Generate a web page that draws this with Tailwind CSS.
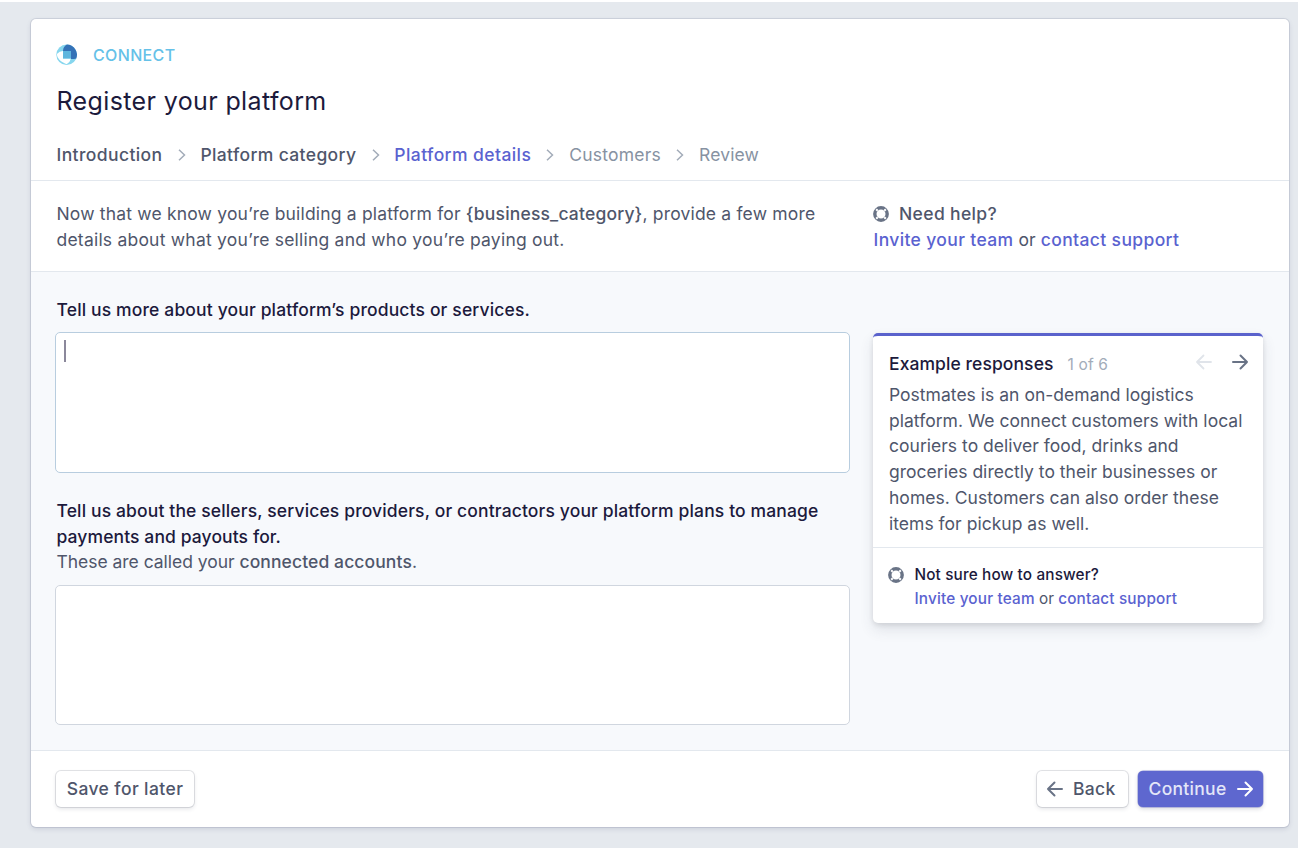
<!DOCTYPE html>
<html lang="en">
<head>
<meta charset="utf-8">
<title>Register your platform</title>
<script src="https://cdn.jsdelivr.net/npm/@tailwindcss/browser@4"></script>
</head>
<body class="h-[852px] overflow-hidden bg-white pt-[2px] font-['Inter',sans-serif] text-[17.5px] leading-[25.75px] text-[#4f566b]">
<div class="h-[846px] bg-[#e5e9ee] pl-[31px] pr-[9px] pt-[17px]">
<main class="flex h-[808px] flex-col overflow-hidden rounded-[5px] bg-white shadow-[0_0_0_1px_rgba(60,66,110,0.12),0_2px_5px_rgba(60,66,110,0.16)]">
  <header class="h-[162px] shrink-0 border-b border-[#e3e8ee] px-[25px] pt-[22px]">
    <div class="flex items-center">
      <svg class="size-[22px]" viewBox="0 0 22 22"><circle cx="10.6" cy="10.8" r="10.3" fill="#86d6ee"/><path d="M7 7C7 4 8.800 1.600 11 .6A10.200 10.200 0 0 1 20.300 14.500Q18.500 15 15 15V7Z" fill="#3472b7"/><path d="M.9 10Q3.500 7 7 7V14.500H15Q14 18.500 10.600 20.200C5 18 1 14.500 .9 10Z" fill="#fff"/><rect x="7" y="7" width="8" height="7.500" fill="#5fb6de"/></svg>
      <span class="ml-[15px] pt-[2px] text-[16px] font-medium tracking-[0.35px] text-[#65c1e8]">CONNECT</span>
    </div>
    <h1 class="mt-[15px] pl-[0.5px] text-[25px] leading-[34px] tracking-[0.38px] text-[#1c1a3c]">Register your platform</h1>
    <nav class="mt-[24px] flex items-center pl-[0.5px] font-medium">
      <span class="tracking-[0.4px]">Introduction</span>
      <svg class="ml-[15.2px] mr-[14.8px] h-3 w-2" viewBox="0 0 8 12" fill="none" stroke="#a3acb9" stroke-width="1.5"><path d="M1 .7 6.500 6 1 11.300"/></svg>
      <span class="tracking-[0.36px]">Platform category</span>
      <svg class="ml-[15.2px] mr-[14.8px] h-3 w-2" viewBox="0 0 8 12" fill="none" stroke="#a3acb9" stroke-width="1.5"><path d="M1 .7 6.500 6 1 11.300"/></svg>
      <span class="tracking-[0.41px] text-[#5a62d0]">Platform details</span>
      <svg class="ml-[15.2px] mr-[14.8px] h-3 w-2" viewBox="0 0 8 12" fill="none" stroke="#a3acb9" stroke-width="1.5"><path d="M1 .7 6.500 6 1 11.300"/></svg>
      <span class="font-normal tracking-[0.22px] text-[#8792a2]">Customers</span>
      <svg class="ml-[15.2px] mr-[14.8px] h-3 w-2" viewBox="0 0 8 12" fill="none" stroke="#a3acb9" stroke-width="1.5"><path d="M1 .7 6.500 6 1 11.300"/></svg>
      <span class="font-normal tracking-[0.15px] text-[#8792a2]">Review</span>
    </nav>
  </header>
  <section class="flex h-[91px] shrink-0 border-b border-[#e3e8ee] pl-[25.5px] pt-[19.8px]">
    <p class="w-[817px] whitespace-nowrap"><span class="tracking-[0.18px]">Now that we know you’re building a platform for <span class="font-medium">{business_category}</span>, provide a few more</span><br><span class="tracking-[0.218px]">details about what you’re selling and who you’re paying out.</span></p>
    <div class="whitespace-nowrap font-medium tracking-[0.36px]">
      <div class="flex items-center"><svg class="-ml-[0.5px] mr-[10px] size-4" viewBox="0 0 16 16"><circle cx="8" cy="8" r="6.200" fill="none" stroke="#697386" stroke-width="3.400"/><path d="m3.200 3.200 1.500 1.500m6.600 6.600 1.500 1.500m0-9.600-1.500 1.500m-6.600 6.600-1.500 1.500" stroke="#fff" stroke-width="2"/></svg><span>Need help?</span></div>
      <div><span class="text-[#5a62d0]">Invite your team</span> <span class="font-normal tracking-[0.1px]">or</span> <span class="text-[#5a62d0]">contact support</span></div>
    </div>
  </section>
  <section class="flex min-h-0 flex-1 bg-[#f7f9fc] pl-[24px] pr-[26px]">
    <form class="w-[795px] shrink-0 pt-[25px]">
      <div class="pl-[1.5px] font-medium tracking-[0.145px] text-[#1c1a3c]">Tell us more about your platform’s products or services.</div>
      <div class="mt-[9px] h-[141px] rounded-[5px] border border-[#b8cddf] bg-white pl-[8px] pt-[7px]"><div class="h-[22px] w-[2px] bg-[#8b889b]"></div></div>
      <div class="mt-[25px] whitespace-nowrap pl-[1.5px]"><div class="font-medium text-[#1c1a3c]"><span class="tracking-[0.135px]">Tell us about the sellers, services providers, or contractors your platform plans to manage</span><br><span class="tracking-[0.1px]">payments and payouts for.</span></div><span class="tracking-[-0.03px]">These are called your <span class="font-medium tracking-[0.1px]">connected accounts</span>.</span></div>
      <div class="mt-[10px] h-[140px] rounded-[5px] border border-[#d0d6df] bg-white"></div>
    </form>
    <aside class="ml-[23px] mt-[61px] h-[290px] w-[390px] shrink-0 whitespace-nowrap rounded-[5px] border-t-[3px] border-[#5a62cc] bg-white shadow-[0_7px_14px_rgba(60,66,87,0.12),0_2px_5px_rgba(0,0,0,0.10)]">
      <div class="h-[212px] border-b border-[#e3e8ee] pl-[16px] pr-[14px] pt-[14px]">
        <div class="flex items-center"><span class="font-medium tracking-[0.08px] text-[#1c1a3c]">Example responses</span><span class="ml-[14px] pt-[2px] text-[15.5px] tracking-[0.14px] text-[#a3acb9]">1 of 6</span>
        <svg class="mb-[4px] ml-auto h-4 w-[18px]" viewBox="0 0 18 16" fill="none" stroke="#e0e4ea" stroke-width="1.8" stroke-linecap="round" stroke-linejoin="round"><path d="M16 8H2m6.500-6.500L2 8l6.500 6.500"/></svg>
        <svg class="mb-[4px] ml-[18px] h-4 w-[18px]" viewBox="0 0 18 16" fill="none" stroke="#697386" stroke-width="2" stroke-linecap="round" stroke-linejoin="round"><path d="M2 8h14M9.500 1.500 16 8l-6.500 6.500"/></svg></div>
        <p class="mt-[4px] tracking-[0.02px]">Postmates is an on-demand logistics<br>platform. We connect customers with local<br>couriers to deliver food, drinks and<br>groceries directly to their businesses or<br>homes. Customers can also order these<br>items for pickup as well.</p>
      </div>
      <div class="flex pl-[15px] pt-[15px] text-[15.3px] font-medium leading-[23.5px] tracking-[0.18px]"><svg class="mr-[10.5px] mt-[4px] size-4" viewBox="0 0 16 16"><circle cx="8" cy="8" r="6.200" fill="none" stroke="#697386" stroke-width="3.400"/><path d="m3.200 3.200 1.500 1.500m6.600 6.600 1.500 1.500m0-9.600-1.500 1.500m-6.600 6.600-1.500 1.500" stroke="#fff" stroke-width="2"/></svg><div><span class="tracking-[0.15px] text-[#1c1a3c]">Not sure how to answer?</span><br><span class="text-[#5a62d0]">Invite your team</span> <span class="font-normal tracking-normal">or</span> <span class="text-[#5a62d0]">contact support</span></div></div>
    </aside>
  </section>
  <footer class="flex h-[77px] shrink-0 border-t border-[#e3e8ee] pl-[25px] pr-[26px] pt-[20px] font-medium">
    <button class="h-[36px] w-[138px] rounded-[5px] bg-white tracking-[0.4px] shadow-[0_0_0_1px_rgba(60,66,87,0.14),0_2px_4px_rgba(60,66,87,0.14)]">Save for later</button>
    <button class="ml-auto flex h-[36px] w-[91px] items-center rounded-[5px] bg-white pl-[9px] tracking-[0.3px] shadow-[0_0_0_1px_rgba(60,66,87,0.14),0_2px_4px_rgba(60,66,87,0.14)]"><svg class="mr-[9px] h-4 w-[18px]" viewBox="0 0 18 16" fill="none" stroke="#697386" stroke-width="2" stroke-linecap="round" stroke-linejoin="round"><path d="M16 8H2m6.500-6.500L2 8l6.500 6.500"/></svg>Back</button>
    <button class="ml-[10px] flex h-[36px] w-[125px] items-center rounded-[5px] bg-[#5e67cf] pl-[10.5px] tracking-[0.3px] text-[#e3e6f8] shadow-[0_0_0_0.5px_rgba(80,88,190,0.6),0_2px_4px_rgba(60,66,87,0.2)]">Continue<svg class="ml-[9px] h-4 w-[18px]" viewBox="0 0 18 16" fill="none" stroke="#fff" stroke-width="2" stroke-linecap="round" stroke-linejoin="round"><path d="M2 8h14M9.500 1.500 16 8l-6.500 6.500"/></svg></button>
  </footer>
</main>
</div>
</body>
</html>
